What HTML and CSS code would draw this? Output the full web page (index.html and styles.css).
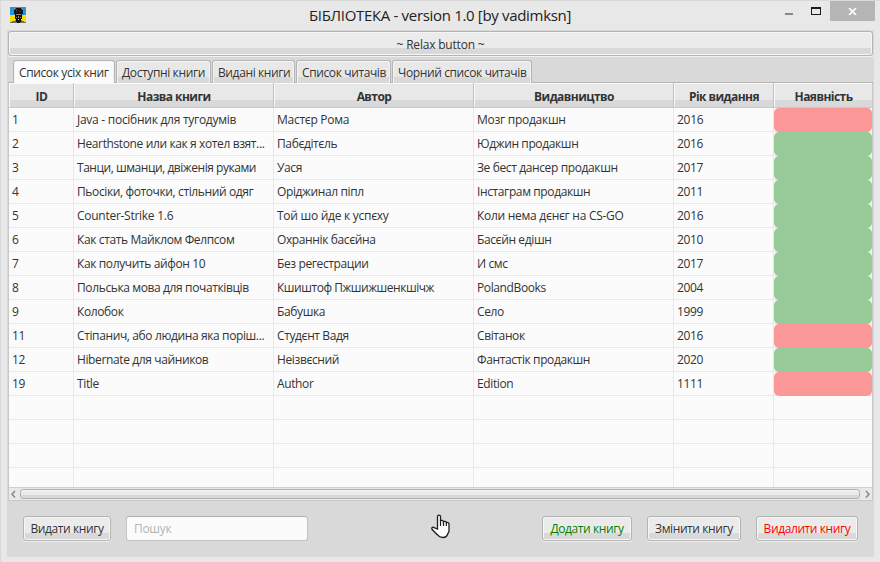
FILE: index.html
```html
<!DOCTYPE html>
<html lang="uk">
<head>
<meta charset="utf-8">
<title>БІБЛІОТЕКА</title>
<link rel="stylesheet" href="styles.css">
</head>
<body>
<div class="window">
  <header class="titlebar">
    <svg class="app-icon" width="16" height="16" viewBox="0 0 16 16" shape-rendering="crispEdges">
      <path fill="#2596d8" d="M0 0h16v8H0z"/><path fill="#ffdc00" d="M0 8h16v8H0z"/>
      <path fill="#6f6c74" d="M0 16v-1h2v-1h3v-1h7v1h2v1h2v1z"/>
      <path fill="#141416" d="M6 1h5v1h1v1h1v4h-1v5h-1v3h-1v1H7v-1H6v-3H5V7H4V3h1V2h1z"/>
      <path fill="#9a8278" d="M6 7h5v1H6zM6 10h1v1H6zM10 10h1v1h-1zM8 9h1v2H8z"/>
      <path fill="#34343c" d="M6 2h1v3H6zM9 4h2v1H9z"/>
      <path fill="#b7b7c0" d="M8 12h1v1H8z"/>
    </svg>
    <h1 class="title"><span>БІБЛІОТЕКА - version 1.0 [by vadimksn]</span></h1>
    <div class="controls">
      <svg width="40" height="21" viewBox="0 0 40 21" shape-rendering="crispEdges"><path fill="#888" d="M2 12h8v2H2z"/><path fill="#1c1c1c" fill-rule="evenodd" d="M28 6h10v8H28zM29 8v5h8V8z"/></svg>
      <span class="close"><svg width="9" height="7" viewBox="0 0 9 7"><path d="M1 0l7 7M8 0L1 7" stroke="#fff" stroke-width="1.7"/></svg></span>
    </div>
  </header>
  <main class="content">
    <button class="btn relax"><span>~ Relax button ~</span></button>
    <nav class="tabs">
      <span class="tab active t1">Список усіх книг</span>
      <span class="tab t2">Доступні книги</span>
      <span class="tab t3">Видані книги</span>
      <span class="tab t4">Список читачів</span>
      <span class="tab t5">Чорний список читачів</span>
    </nav>
    <section class="table">
      <div class="row head"><span>ID</span><span>Назва книги</span><span>Автор</span><span>Видавництво</span><span>Рік видання</span><span>Наявність</span></div>
      <div class="rows">
        <div class="row loose"><span>1</span><span>Java - посібник для тугодумів</span><span>Мастєр Рома</span><span>Мозг продакшн</span><span>2016</span><i class="no"></i></div>
        <div class="row"><span>2</span><span>Hearthstone или как я хотел взят...</span><span>Пабєдітєль</span><span>Юджин продакшн</span><span>2016</span><i class="yes"></i></div>
        <div class="row"><span>3</span><span class="tight">Танци, шманци, двіженія руками</span><span>Уася</span><span>Зе бест дансер продакшн</span><span>2017</span><i class="yes"></i></div>
        <div class="row"><span>4</span><span>Пьосіки, фоточки, стільний одяг</span><span>Оріджинал піпл</span><span>Інстаграм продакшн</span><span>2011</span><i class="yes"></i></div>
        <div class="row loose"><span>5</span><span>Counter-Strike 1.6</span><span>Той шо йде к успєху</span><span>Коли нема дєнєг на CS-GO</span><span>2016</span><i class="yes"></i></div>
        <div class="row"><span>6</span><span>Как стать Майклом Фелпсом</span><span>Охраннік басєйна</span><span>Басєйн едішн</span><span>2010</span><i class="yes"></i></div>
        <div class="row"><span>7</span><span>Как получить айфон 10</span><span>Без регестрации</span><span>И смс</span><span>2017</span><i class="yes"></i></div>
        <div class="row"><span>8</span><span>Польська мова для початківців</span><span class="tight">Кшиштоф Пжшижшенкшічж</span><span>PolandBooks</span><span>2004</span><i class="yes"></i></div>
        <div class="row"><span>9</span><span>Колобок</span><span>Бабушка</span><span>Село</span><span>1999</span><i class="yes"></i></div>
        <div class="row"><span>11</span><span>Стіпанич, або людина яка поріш...</span><span>Студєнт Вадя</span><span>Світанок</span><span>2016</span><i class="no"></i></div>
        <div class="row"><span>12</span><span>Hibernate для чайников</span><span>Неізвєсний</span><span>Фантастік продакшн</span><span>2020</span><i class="yes"></i></div>
        <div class="row"><span>19</span><span>Title</span><span>Author</span><span>Edition</span><span>1111</span><i class="no"></i></div>
        <div class="row"><span></span><span></span><span></span><span></span><span></span><i></i></div>
        <div class="row"><span></span><span></span><span></span><span></span><span></span><i></i></div>
        <div class="row"><span></span><span></span><span></span><span></span><span></span><i></i></div>
        <div class="row"><span></span><span></span><span></span><span></span><span></span><i></i></div>
      </div>
      <div class="scrollbar">
        <svg width="11" height="12" viewBox="0 0 11 12"><path d="M6 3L3 6.200l3 3.300" fill="none" stroke="#858585" stroke-width="1.400"/></svg>
        <div class="thumb"></div>
        <svg width="12" height="12" viewBox="0 0 12 12"><path d="M6 3l3 3.200L6 9.500" fill="none" stroke="#858585" stroke-width="1.400"/></svg>
      </div>
    </section>
    <footer class="actions">
      <button class="btn b1">Видати книгу</button>
      <input class="search" placeholder="Пошук">
      <span class="spacer"></span>
      <button class="btn b2">Додати книгу</button>
      <button class="btn b3">Змінити книгу</button>
      <button class="btn b4">Видалити книгу</button>
    </footer>
  </main>
  <svg class="cursor" width="19" height="25" viewBox="0 0 19 25"><path d="M6.500 15V2.500C6.500.6 9.500.6 9.500 2.500V7c.5-1 3-.8 3 .8.700-.8 2.800-.6 2.900.9.900-.6 2.600-.2 2.600 1.300v7c0 1-.8 2-1.300 3-.8 2.500-2 3.500-4.700 3.500-3 0-4.200-.8-5.700-2.800L1.200 15.500c-1-1.600.4-2.900 2-1.900z" fill="#fff" stroke="#1b1b24" stroke-width="1.300"/><path d="M9.500 6v6M12.500 7.500V12M15.400 8.500V12" stroke="#1b1b24" stroke-width="1.200"/></svg>
</div>
</body>
</html>
```
FILE: styles.css
```css
* { box-sizing: border-box; }
body { margin: 0; font: 12px "Open Sans", "Noto Sans", sans-serif; color: #333; }
.window { position: relative; width: 880px; height: 562px; background: #e8e8e8; border: solid #d9d9d9; border-width: 1px 0 0 1px; overflow: hidden; }
.titlebar { display: flex; height: 29px; padding-left: 9px; }
.app-icon { margin-top: 6px; flex: none; }
.title { flex: 1; margin: 0 0 0 71px; font-size: 15px; font-weight: 400; line-height: 29px; text-align: center; letter-spacing: -.32px; white-space: nowrap; color: #222; }
.controls { display: flex; width: 92px; margin-right: 5px; gap: 7px; flex: none; }
.close { display: flex; width: 45px; height: 20px; align-items: center; justify-content: center; background: #b5b5b5; }
.content { width: 867px; height: 527px; margin-left: 6px; padding: 1px 1px 0; background: #d9d9d9; }
.btn { display: block; height: 25px; padding: 1px 0 0; border: 1px solid #b4b4b4; border-radius: 3px; background: linear-gradient(#ebebeb 0 16px, #d9d9d9 16px); box-shadow: inset 0 0 0 1px #f6f6f6, 0 1px 0 #eee; font: inherit; color: inherit; line-height: 22px; white-space: nowrap; letter-spacing: -.4px; }
.relax { width: 865px; padding-top: 2px; letter-spacing: -.2px; }
.tabs { display: flex; gap: 1px; height: 27px; padding: 3px 5px 0; border-top: 1px solid #f0f0f0; border-bottom: 1px solid #b5b5b5; }
.tab { height: 23px; padding-left: 5px; border: 1px solid #b5b5b5; border-bottom: 0; border-radius: 3px 3px 0 0; background: linear-gradient(#e8e8e8 0 16px, #d9d9d9 16px); box-shadow: inset 0 1px #f8f8f8, inset 1px 0 #f2f2f2, inset -1px 0 #f2f2f2; line-height: 23px; letter-spacing: -.38px; white-space: nowrap; }
.tab.active { height: 24px; background: #fbfbfb; }
.t1 { width: 102px; } .t2 { width: 95px; } .t3 { width: 83px; } .t4 { width: 95px; } .t5 { width: 140px; }
.table { width: 865px; height: 418px; border: solid #c8c8c8; border-width: 0 1px 1px; background: #fbfbfb; }
.row { display: grid; grid-template-columns: 65px 200px 200px 200px 100px 98px; height: 24px; border-bottom: 1px solid #e8e8e8; line-height: 23px; }
.row > span { padding-left: 3px; border-right: 1px solid #e8e8e8; white-space: nowrap; letter-spacing: -.38px; }
.row.loose > span { letter-spacing: -.27px; }
.row > .tight { letter-spacing: -.46px; }
.row > i { height: 24px; border-radius: 5px; }
.no { background: #fb9796; }
.yes { background: #98ca98; }
.head { height: 25px; border-bottom: 1px solid #c8c8c8; font-weight: 700; text-align: center; line-height: 27px; }
.head > span { height: 24px; padding: 0 0 0 1px; letter-spacing: -.55px; border-right: 1px solid #c0c0c0; background: linear-gradient(#e8e8e8 0 17px, #d9d9d9 17px); box-shadow: inset 1px 1px #fafafa; }
.head > span:last-child { border-right: 0; }
.rows { height: 379px; overflow: hidden; }
.scrollbar { display: flex; height: 13px; border-top: 1px solid #d0d0d0; background: #e8e8e8; }
.thumb { flex: 1; height: 10px; margin-top: 1px; border: 1px solid #b0b0b0; border-radius: 3px; background: linear-gradient(#ebebeb 0 5px, #d9d9d9 5px); box-shadow: inset 0 1px #f6f6f6; }
.actions { display: flex; padding: 15px 15px 0; }
.search { width: 182px; height: 25px; margin-left: 15px; padding: 0 7px; border: 1px solid #c2c2c2; border-top-color: #b0b0b0; border-radius: 3px; background: #fbfbfb; font: inherit; letter-spacing: -.3px; }
.search::placeholder { color: #b4b4b4; opacity: 1; }
.spacer { flex: 1; }
.b1 { width: 88px; } .b2 { width: 90px; color: green; } .b3 { width: 94px; margin: 0 15px; } .b4 { width: 102px; color: red; }
.cursor { position: absolute; left: 430px; top: 513px; }
```
